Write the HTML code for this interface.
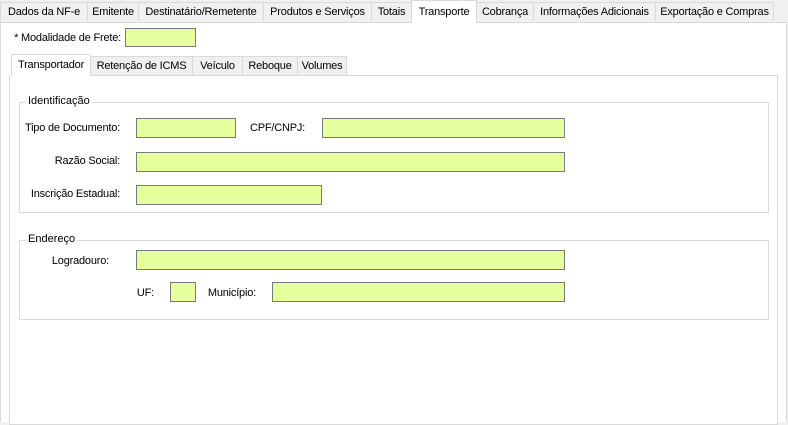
<!DOCTYPE html>
<html><head><meta charset="utf-8"><style>
body{margin:0;width:788px;height:418px;background:#f0f0f0;position:relative;overflow:hidden;font-family:"Liberation Sans",Tahoma,sans-serif;font-size:11px;color:#000}
.a{position:absolute}
.tab{position:absolute;top:2px;height:19px;border:1px solid #d9d9d9;border-bottom:none;background:#f0f0f0;box-sizing:border-box;text-align:center;line-height:18px;white-space:nowrap;letter-spacing:-0.2px}
.act{background:#fff;top:0;height:23px;z-index:2;line-height:22px}
.st{position:absolute;top:56px;height:19px;border:1px solid #d9d9d9;border-bottom:none;background:#f0f0f0;box-sizing:border-box;text-align:center;line-height:18px;white-space:nowrap;letter-spacing:-0.2px}
.sact{background:#fff;top:54px;height:22px;z-index:2;line-height:20px}
.in{position:absolute;background:#e6ff9e;border:1px solid #7a7a7a;box-sizing:border-box}
.lb{position:absolute;white-space:nowrap;text-align:right;letter-spacing:-0.2px}
.gb{position:absolute;border:1px solid #dcdcdc;box-sizing:border-box}
.gt{position:absolute;background:#fff;padding:0 2px;white-space:nowrap}
</style></head><body>
<div class="a" style="left:0;top:22px;width:787px;height:400px;background:#fff;border:1px solid #d9d9d9;border-bottom:none;box-sizing:border-box"></div>
<div class="tab" style="left:0;width:88px">Dados da NF-e</div>
<div class="tab" style="left:87px;width:52px">Emitente</div>
<div class="tab" style="left:138px;width:126px">Destinatário/Remetente</div>
<div class="tab" style="left:263px;width:109px">Produtos e Serviços</div>
<div class="tab" style="left:371px;width:41px">Totais</div>
<div class="tab act" style="left:411px;width:66px">Transporte</div>
<div class="tab" style="left:476px;width:58px">Cobrança</div>
<div class="tab" style="left:533px;width:123px">Informações Adicionais</div>
<div class="tab" style="left:655px;width:119px">Exportação e Compras</div>

<div class="lb" style="right:667px;top:32px">* Modalidade de Frete:</div>
<div class="in" style="left:125px;top:28px;width:71px;height:19px"></div>

<div class="a" style="left:9px;top:75px;width:769px;height:350px;background:#fff;border:1px solid #d9d9d9;box-sizing:border-box"></div>
<div class="st sact" style="left:11px;width:80px">Transportador</div>
<div class="st" style="left:90px;width:103px">Retenção de ICMS</div>
<div class="st" style="left:192px;width:51px">Veículo</div>
<div class="st" style="left:242px;width:56px">Reboque</div>
<div class="st" style="left:297px;width:50px">Volumes</div>

<div class="gb" style="left:19px;top:102px;width:750px;height:111px"></div>
<div class="gt" style="left:26px;top:95px">Identificação</div>
<div class="lb" style="right:668px;top:122px">Tipo de Documento:</div>
<div class="in" style="left:136px;top:118px;width:100px;height:20px"></div>
<div class="lb" style="right:483px;top:122px">CPF/CNPJ:</div>
<div class="in" style="left:322px;top:118px;width:243px;height:20px"></div>
<div class="lb" style="right:668px;top:155px">Razão Social:</div>
<div class="in" style="left:136px;top:152px;width:429px;height:20px"></div>
<div class="lb" style="right:668px;top:188px">Inscrição Estadual:</div>
<div class="in" style="left:136px;top:185px;width:186px;height:20px"></div>

<div class="gb" style="left:19px;top:240px;width:750px;height:80px"></div>
<div class="gt" style="left:26px;top:233px">Endereço</div>
<div class="lb" style="right:679px;top:255px">Logradouro:</div>
<div class="in" style="left:136px;top:250px;width:429px;height:20px"></div>
<div class="lb" style="right:634px;top:287px">UF:</div>
<div class="in" style="left:170px;top:282px;width:26px;height:20px"></div>
<div class="lb" style="right:532px;top:287px">Município:</div>
<div class="in" style="left:272px;top:282px;width:293px;height:20px"></div>
</body></html>
